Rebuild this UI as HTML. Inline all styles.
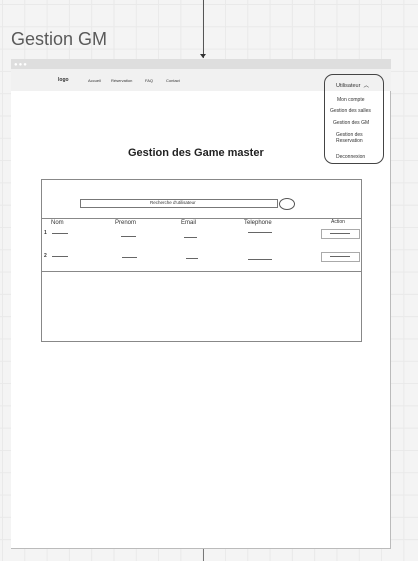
<!DOCTYPE html>
<html><head><style>
body{margin:0;width:418px;height:561px;overflow:hidden;position:relative;font-family:"Liberation Sans",sans-serif;
background-color:#f4f4f4;
background-image:linear-gradient(90deg,#e9e9e9 1px,transparent 1px),linear-gradient(#e9e9e9 1px,transparent 1px);
background-size:22.3px 22.3px;background-position:2px 4px;}
.a{position:absolute}
.t{position:absolute;font-size:5px;color:#333;white-space:nowrap}
.sq{position:absolute;height:1px;background:#666}
</style></head><body>
<div class="a" style="left:203px;top:0;width:1px;height:58px;background:#555"></div>
<div class="a" style="left:200px;top:54px;width:0;height:0;border-left:3px solid transparent;border-right:3px solid transparent;border-top:4px solid #333"></div>
<div class="a" style="left:203px;top:549px;width:1px;height:12px;background:#777"></div>
<div class="a" style="left:11px;top:29px;font-size:18px;color:#5a5a5a">Gestion GM</div>
<div class="a" style="left:11px;top:59px;width:379px;height:489px;background:#fff;border-right:1px solid #bbb;border-bottom:1px solid #bbb"></div>
<div class="a" style="left:11px;top:59px;width:380px;height:10px;background:#dedede"></div>
<div class="a" style="left:14px;top:62px;font-size:6px;color:#fff;letter-spacing:1px">●●●</div>
<div class="a" style="left:11px;top:69px;width:380px;height:22px;background:#f1f1f1"></div>
<div class="t" style="left:58px;top:77px;font-weight:bold;color:#333">logo</div>
<div class="t" style="left:88px;top:78px;font-size:4px">Accueil</div>
<div class="t" style="left:111px;top:78px;font-size:4px">Réservation</div>
<div class="t" style="left:145px;top:78px;font-size:4px">FAQ</div>
<div class="t" style="left:166px;top:78px;font-size:4px">Contact</div>
<div class="a" style="left:324px;top:74px;width:58px;height:88px;border:1px solid #444;border-radius:9px"></div>
<div class="t" style="left:336px;top:81px;font-size:5.5px">Utilisateur &nbsp;︿</div>
<div class="t" style="left:337px;top:97px">Mon compte</div>
<div class="t" style="left:330px;top:108px">Gestion des salles</div>
<div class="t" style="left:333px;top:120px">Gestion des GM</div>
<div class="t" style="left:336px;top:132px">Gestion des<br>Reservation</div>
<div class="t" style="left:336px;top:154px">Deconnexion</div>
<div class="a" style="left:128px;top:147px;font-size:11px;font-weight:bold;color:#222">Gestion des Game master</div>
<div class="a" style="left:41px;top:179px;width:319px;height:161px;border:1px solid #888"></div>
<div class="a" style="left:41px;top:218px;width:320px;height:52px;border-top:1px solid #888;border-bottom:1px solid #888"></div>
<div class="a" style="left:80px;top:199px;width:196px;height:7px;border:1px solid #777"></div>
<div class="t" style="left:150px;top:200px;font-size:4.5px">Recherche d'utilisateur</div>
<div class="a" style="left:279px;top:198px;width:14px;height:10px;border:1px solid #555;border-radius:50%"></div>
<div class="t" style="left:51px;top:220px;font-size:6px">Nom</div>
<div class="t" style="left:115px;top:220px;font-size:6px">Prenom</div>
<div class="t" style="left:181px;top:220px;font-size:6px">Email</div>
<div class="t" style="left:244px;top:220px;font-size:6px">Telephone</div>
<div class="t" style="left:331px;top:219px;font-size:5px">Action</div>
<div class="t" style="left:44px;top:230px;font-weight:bold">1</div>
<div class="t" style="left:44px;top:253px;font-weight:bold">2</div>
<div class="sq" style="left:52px;top:233px;width:16px"></div>
<div class="sq" style="left:52px;top:256px;width:16px"></div>
<div class="sq" style="left:121px;top:236px;width:15px"></div>
<div class="sq" style="left:122px;top:257px;width:15px"></div>
<div class="sq" style="left:184px;top:237px;width:13px"></div>
<div class="sq" style="left:186px;top:258px;width:12px"></div>
<div class="sq" style="left:248px;top:232px;width:24px"></div>
<div class="sq" style="left:248px;top:259px;width:24px"></div>
<div class="a" style="left:321px;top:229px;width:37px;height:8px;border:1px solid #aaa"></div>
<div class="sq" style="left:330px;top:233px;width:20px"></div>
<div class="a" style="left:321px;top:252px;width:37px;height:8px;border:1px solid #aaa"></div>
<div class="sq" style="left:330px;top:256px;width:20px"></div>
</body></html>
